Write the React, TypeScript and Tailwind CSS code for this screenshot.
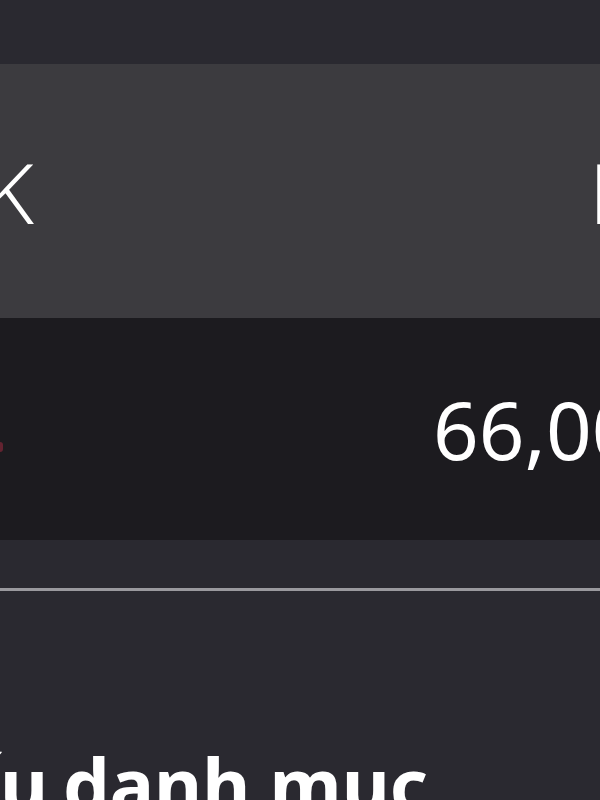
export default function App() {
  return (
    <div className="w-[600px] h-[800px] overflow-hidden bg-[#2a2930] text-white font-['Noto_Sans',sans-serif]">
      {/* top strip */}
      <div className="h-[64px]" />

      {/* Table header */}
      <div className="h-[254px] bg-[#3c3b3f] flex items-center whitespace-nowrap">
        <div className="w-[34px] shrink-0 flex justify-end">
          <span className="text-[83px] leading-none font-light">Mã CK</span>
        </div>
        <span className="ml-[555px] shrink-0 text-[83px] leading-none font-light">Khối lượng</span>
      </div>

      {/* Table row */}
      <div className="h-[222px] bg-[#1c1b1f] flex items-center whitespace-nowrap">
        <div className="w-[3px] h-[10px] mt-[36px] rounded-r-full bg-[#d0304a] opacity-40 shrink-0" />
        <span className="ml-[430px] shrink-0 text-[80px] leading-none">66,000</span>
      </div>

      <div className="h-[48px]" />
      <div className="h-[3px] bg-[#9a999e]" />

      {/* Section title */}
      <div className="pt-[156px] flex whitespace-nowrap">
        <div className="w-[48px] shrink-0 flex justify-end">
          <span className="text-[74px] leading-none font-bold">Cơ cấu</span>
        </div>
        <span className="ml-[15px] shrink-0 text-[74px] leading-none font-bold">danh mục</span>
      </div>
    </div>
  );
}
